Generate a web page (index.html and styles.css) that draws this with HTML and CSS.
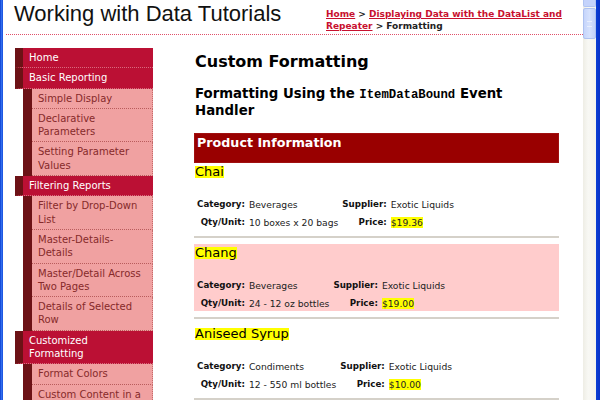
FILE: index.html
```html
<!DOCTYPE html>
<html lang="en">
<head>
<meta charset="utf-8">
<title>Working with Data Tutorials</title>
<link rel="stylesheet" href="styles.css">
</head>
<body>
<div class="window">
  <div class="frame-left"></div>
  <div class="page">
    <header class="header">
      <div class="site-title">Working with Data Tutorials</div>
      <div class="breadcrumb"><a href="#">Home</a> &gt; <a href="#">Displaying Data with the DataList and Repeater</a> &gt; Formatting</div>
    </header>
    <div class="layout">
      <nav class="menu">
        <ul class="menu-list">
          <li class="top"><a href="#">Home</a></li>
          <li class="top"><a href="#">Basic Reporting</a>
            <ul class="sub">
              <li><a href="#">Simple Display</a></li>
              <li><a href="#">Declarative Parameters</a></li>
              <li><a href="#">Setting Parameter Values</a></li>
            </ul>
          </li>
          <li class="top"><a href="#">Filtering Reports</a>
            <ul class="sub">
              <li><a href="#">Filter by Drop-Down List</a></li>
              <li><a href="#">Master-Details-Details</a></li>
              <li><a href="#">Master/Detail Across Two Pages</a></li>
              <li><a href="#">Details of Selected Row</a></li>
            </ul>
          </li>
          <li class="top"><a href="#">Customized Formatting</a>
            <ul class="sub">
              <li><a href="#">Format Colors</a></li>
              <li><a href="#">Custom Content in a GridView</a></li>
            </ul>
          </li>
        </ul>
      </nav>
      <main class="main">
        <h1 class="page-title">Custom Formatting</h1>
        <h2 class="section-title">Formatting Using the <code>ItemDataBound</code> Event Handler</h2>
        <div class="list-header">Product Information</div>

        <div class="item">
          <div class="name"><span>Chai</span></div>
          <table class="details">
            <tr><td class="lbl">Category:</td><td class="val">Beverages</td><td class="lbl">Supplier:</td><td class="val">Exotic Liquids</td></tr>
            <tr><td class="lbl">Qty/Unit:</td><td class="val">10 boxes x 20 bags</td><td class="lbl">Price:</td><td class="val"><span class="hl">$19.36</span></td></tr>
          </table>
        </div>
        <hr class="sep">
        <div class="item alt">
          <div class="name"><span>Chang</span></div>
          <table class="details">
            <tr><td class="lbl">Category:</td><td class="val">Beverages</td><td class="lbl">Supplier:</td><td class="val">Exotic Liquids</td></tr>
            <tr><td class="lbl">Qty/Unit:</td><td class="val">24 - 12 oz bottles</td><td class="lbl">Price:</td><td class="val"><span class="hl">$19.00</span></td></tr>
          </table>
        </div>
        <hr class="sep">
        <div class="item">
          <div class="name"><span>Aniseed Syrup</span></div>
          <table class="details">
            <tr><td class="lbl">Category:</td><td class="val">Condiments</td><td class="lbl">Supplier:</td><td class="val">Exotic Liquids</td></tr>
            <tr><td class="lbl">Qty/Unit:</td><td class="val">12 - 550 ml bottles</td><td class="lbl">Price:</td><td class="val"><span class="hl">$10.00</span></td></tr>
          </table>
        </div>
        <hr class="sep">
      </main>
    </div>
  </div>
  <div class="scrollbar">
    <div class="sb-button"></div>
    <div class="sb-thumb"><span class="grip"></span></div>
    <div class="sb-track"></div>
  </div>
  <div class="frame-right"></div>
</div>
</body>
</html>
```

FILE: styles.css
```css
* { box-sizing: border-box; }
html, body { margin: 0; padding: 0; }
body {
  width: 600px;
  height: 400px;
  overflow: hidden;
  background: #ffffff;
  font-family: "DejaVu Sans", Verdana, sans-serif;
  color: #000;
}
.window {
  display: flex;
  width: 600px;
  height: 400px;
  overflow: hidden;
}
.frame-left {
  width: 3px;
  flex: none;
  background: linear-gradient(to right, #0a3bd0, #3a78f2 60%, #0c40d8);
}
.frame-right {
  width: 4px;
  flex: none;
  background: linear-gradient(to right, #0a3fd4, #0831c8);
}
.page {
  flex: 1;
  min-width: 0;
  overflow: hidden;
  background: #fff;
}
/* header */
.header {
  display: flex;
  justify-content: space-between;
  align-items: flex-start;
  height: 35px;
  margin-left: 3px;
  padding-left: 8px;
  padding-right: 17px;
  border-bottom: 1px dotted #e0506a;
}
.site-title {
  font-family: "Liberation Sans", Arial, sans-serif;
  font-size: 22px;
  line-height: 25px;
  margin-top: 1px;
  color: #111;
}
.breadcrumb {
  width: 240px;
  margin-top: 8px;
  font-size: 9px;
  font-weight: bold;
  line-height: 12px;
  color: #222;
}
.breadcrumb a { color: #c8102e; text-decoration: underline; }
/* layout */
.layout {
  display: flex;
  align-items: flex-start;
  padding-left: 12px;
  gap: 41px;
}
/* menu */
.menu {
  width: 138px;
  flex: none;
  margin-top: 13px;
  font-size: 10px;
  line-height: 13.3px;
}
.menu-list, .sub { list-style: none; margin: 0; padding: 0; }
.top > a {
  display: block;
  background: #bb1034;
  color: #fff;
  text-decoration: none;
  border-left: 8px solid #6c1216;
  border-bottom: 1px dotted #d86b7e;
  padding: 3px 10px 3px 6px;
}
.sub {
  margin-left: 8px;
  border-left: 9px solid #6c1216;
}
.sub a {
  display: block;
  background: #f0a1a1;
  color: #862a2a;
  text-decoration: none;
  border-bottom: 1px dotted #b95c5c;
  border-right: 1px dotted #c46a6a;
  padding: 3px 8px 3px 6px;
}
/* main */
.main {
  width: 365px;
  flex: none;
}
.page-title {
  margin: 17px 0 0 0;
  font-size: 16px;
  line-height: 19px;
  font-weight: bold;
  padding-left: 1px;
}
.section-title {
  margin: 14px 0 0 0;
  font-size: 13.3px;
  line-height: 17px;
  font-weight: bold;
  padding-left: 1px;
}
.section-title code {
  font-family: "Liberation Mono", "Courier New", monospace;
  font-size: 12.3px;
  font-weight: bold;
  line-height: 1;
}
.list-header {
  margin-top: 14px;
  height: 30px;
  background: #990000;
  color: #fff;
  font-size: 12.7px;
  font-weight: bold;
  line-height: 16px;
  padding: 1px 2px;
  border: 1px solid #a01010;
}
.item {
  height: 67px;
  padding-top: 3px;
}
.item.alt { background: #ffcccc; }
.name {
  display: flex;
  height: 12px;
  margin-bottom: 16px;
  font-size: 13px;
  padding-left: 1px;
}
.name span {
  display: block;
  line-height: 12px;
  background: #ffff00;
}
.details {
  border-collapse: separate;
  border-spacing: 2px;
}
.details td {
  height: 16px;
  padding: 0 1px;
  white-space: nowrap;
  vertical-align: middle;
}
.details .lbl {
  text-align: right;
  font-weight: bold;
  font-size: 8.7px;
  color: #111;
}
.details .val {
  font-size: 9.2px;
  color: #222;
}
.hl { background: #ffff00; }
.sep {
  margin: 6px 0;
  height: 2px;
  border: none;
  background: #d5d1c9;
}
/* scrollbar */
.scrollbar {
  width: 13px;
  flex: none;
  display: flex;
  flex-direction: column;
  background: linear-gradient(to right, #eeede5, #f8f8f4 40%, #f3f2ec);
}
.sb-button {
  height: 7px;
  flex: none;
  background: #c4d3fb;
  border: 1px solid #b0c4f2;
  border-top: none;
  border-radius: 0 0 2px 2px;
}
.sb-thumb {
  height: 31px;
  flex: none;
  margin-top: 1px;
  background: linear-gradient(to right, #c6d5fb, #d5e1fd 50%, #c2d2f9);
  border: 1px solid #aec2f0;
  border-radius: 2px;
  display: flex;
  align-items: center;
  justify-content: center;
}
.grip {
  width: 5px;
  height: 6px;
  border-top: 1px solid #e8eefd;
  border-bottom: 1px solid #e8eefd;
}
.sb-track { flex: 1; }
```
